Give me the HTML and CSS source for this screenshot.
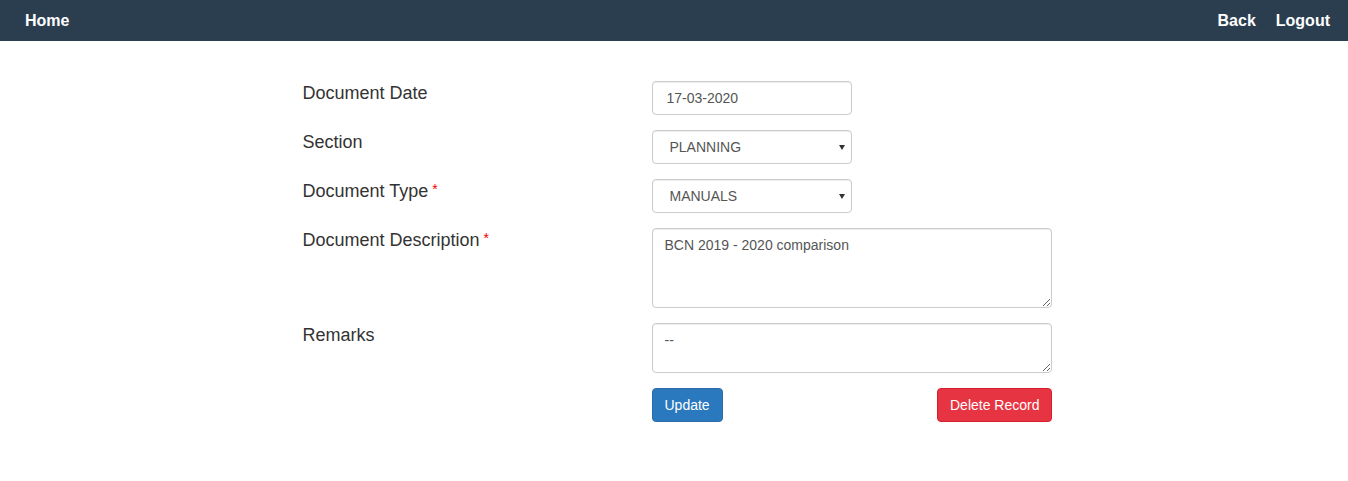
FILE: index.html
```html
<!DOCTYPE html>
<html>
<head>
<meta charset="utf-8">
<link rel="stylesheet" href="styles.css">
</head>
<body>
<nav class="navbar">
  <a class="nav-link" href="#">Home</a>
  <div class="nav-right">
    <a class="nav-link" href="#">Back</a>
    <a class="nav-link" href="#">Logout</a>
  </div>
</nav>
<main class="form-wrap">
  <div class="row">
    <label class="label">Document Date</label>
    <div class="control"><input class="input short date" type="text" value="17-03-2020"></div>
  </div>
  <div class="row">
    <label class="label">Section</label>
    <div class="control">
      <span class="select-wrap"><select class="input short select"><option>PLANNING</option></select></span>
    </div>
  </div>
  <div class="row">
    <label class="label">Document Type<span class="req">*</span></label>
    <div class="control">
      <span class="select-wrap"><select class="input short select"><option>MANUALS</option></select></span>
    </div>
  </div>
  <div class="row">
    <label class="label">Document Description<span class="req">*</span></label>
    <div class="control"><textarea class="input area tall">BCN 2019 - 2020 comparison</textarea></div>
  </div>
  <div class="row">
    <label class="label">Remarks</label>
    <div class="control"><textarea class="input area small">--</textarea></div>
  </div>
  <div class="row">
    <div class="label"></div>
    <div class="control buttons">
      <button class="btn btn-primary">Update</button>
      <button class="btn btn-danger">Delete Record</button>
    </div>
  </div>
</main>
</body>
</html>
```
FILE: styles.css
```css
* { box-sizing: border-box; }
body {
  margin: 0;
  font-family: "Liberation Sans", Arial, sans-serif;
  font-size: 14px;
  color: #333;
  background: #fff;
}
.navbar {
  height: 41px;
  background: #2b3e50;
  display: flex;
  align-items: center;
  justify-content: space-between;
  padding: 0 18px 0 25px;
}
.nav-right { display: flex; gap: 20px; }
.nav-link {
  color: #fff;
  font-weight: bold;
  font-size: 16px;
  text-decoration: none;
  line-height: 20px;
}
.form-wrap {
  width: 757px;
  margin: 40px auto 0;
  padding-left: 7px;
}
.row {
  display: flex;
  margin-bottom: 15px;
}
.label {
  width: 349px;
  flex: none;
  font-size: 18px;
  line-height: 1.42857;
  color: #333;
}
.req {
  color: #e00;
  font-size: 14px;
  vertical-align: top;
  margin-left: 4px;
  position: relative;
  top: 1px;
}
.control { width: 400px; flex: none; }
.input {
  display: block;
  font-family: "Liberation Sans", Arial, sans-serif;
  font-size: 14px;
  color: #555;
  border: 1px solid #ccc;
  border-radius: 4px;
  background: #fff;
  padding: 6px 12px;
  box-shadow: inset 0 1px 1px rgba(0,0,0,0.075);
  outline: none;
}
.short { width: 200px; height: 34px; }
.date { padding-left: 14px; }
.select-wrap {
  display: block;
  position: relative;
  width: 200px;
}
.select {
  appearance: none;
  -webkit-appearance: none;
  padding-left: 17px;
}
.select-wrap::after {
  content: "";
  position: absolute;
  right: 7px;
  top: 15px;
  border-left: 3px solid transparent;
  border-right: 3px solid transparent;
  border-top: 5px solid #333;
}
.area {
  width: 400px;
  line-height: 20px;
  resize: vertical;
}
.tall { height: 80px; }
.small { height: 50px; }
.buttons {
  display: flex;
  justify-content: space-between;
}
.btn {
  font-family: "Liberation Sans", Arial, sans-serif;
  font-size: 14px;
  line-height: 20px;
  padding: 6px 12px;
  border-radius: 4px;
  color: #fff;
  border: 1px solid transparent;
  height: 34px;
}
.btn-primary { background: #2a78bd; border-color: #2e6da4; }
.btn-danger { background: #e63442; border-color: #d41f2e; padding: 6px 11px 6px 12px; }
```
